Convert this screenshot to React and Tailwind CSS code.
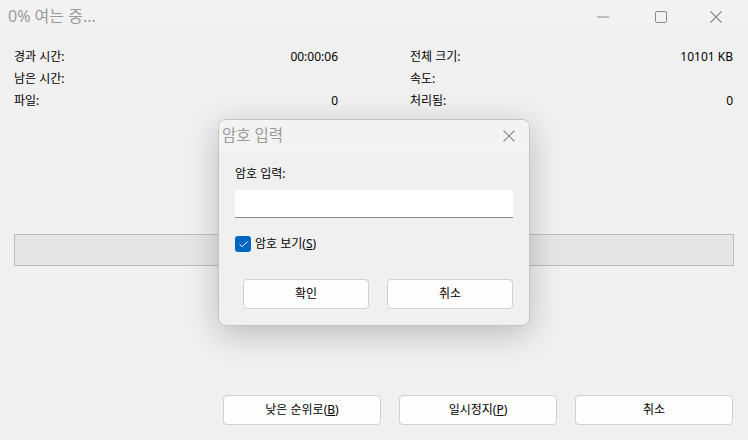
import { Check } from 'lucide-react';

const font = { fontFamily: '"Segoe UI", "Noto Sans", "Noto Sans CJK KR", sans-serif' };

const StatRow = ({ label, value }) => (
  <div className="flex items-center justify-between h-[22px]">
    <span>{label}</span>
    <span>{value}</span>
  </div>
);

const WinButton = ({ children, className = '' }) => (
  <button className={`h-[30px] rounded-[4px] border border-[#d0d0d0] bg-[#fdfdfd] text-[12px] text-black leading-none flex items-center justify-center ${className}`}>
    {children}
  </button>
);

const PasswordDialog = () => (
  <div className="absolute left-[218px] top-[119px] w-[312px] h-[207px] rounded-[8px] border border-[#c4c4c4] bg-[#f0f0f0] shadow-[0_8px_32px_rgba(0,0,0,0.22)] overflow-hidden flex flex-col">
    <div className="h-[31px] bg-[#f3f3f3] flex items-center justify-between pl-[3px] pr-[14px]">
      <span className="text-[15.5px] text-[#9a9a9a]">암호 입력</span>
      <svg width="12" height="12" viewBox="0 0 12 12" stroke="#8a8a8a" strokeWidth="1.1">
        <path d="M0.5 0.5L11.5 11.5M11.5 0.5L0.5 11.5" />
      </svg>
    </div>
    <div className="flex flex-col px-[16px] pt-[15px]">
      <span className="text-[12px] leading-[16px]">암호 입력:</span>
      <div className="mt-[8px] h-[28px] bg-white border-b border-[#8a8a8a] rounded-t-[2px]" />
      <label className="mt-[18px] flex items-center gap-[4px] text-[12px] leading-[16px]">
        <span className="w-[16px] h-[16px] rounded-[3px] bg-[#0067c0] flex items-center justify-center">
          <Check size={11} color="white" strokeWidth={2} />
        </span>
        <span>암호 보기(<u>S</u>)</span>
      </label>
      <div className="mt-[27px] flex gap-[18px] pl-[8px]">
        <WinButton className="w-[126px]">확인</WinButton>
        <WinButton className="w-[126px]">취소</WinButton>
      </div>
    </div>
  </div>
);

export default function App() {
  return (
    <div style={font} className="relative w-[748px] h-[440px] bg-[#f0f0f0] text-black flex flex-col overflow-hidden">
      <div className="h-[33px] bg-gradient-to-b from-[#f3f3f3] to-[#f1f1f1] flex items-center justify-between pl-[8px]">
        <span className="text-[16px] text-[#9a9a9a] -mt-[1px]">0% 여는 중...</span>
        <div className="flex items-center h-full">
          <div className="w-[58px] h-full flex items-center justify-center">
            <svg width="12" height="2" viewBox="0 0 12 2"><path d="M0 1H12" stroke="#8a8a8a" strokeWidth="1" /></svg>
          </div>
          <div className="w-[58px] h-full flex items-center justify-center">
            <svg width="12" height="12" viewBox="0 0 12 12"><rect x="0.5" y="0.5" width="11" height="11" rx="1.5" fill="none" stroke="#8a8a8a" strokeWidth="1" /></svg>
          </div>
          <div className="w-[58px] h-full flex items-center justify-center pr-[6px]">
            <svg width="12" height="12" viewBox="0 0 12 12"><path d="M0.5 0.5L11.5 11.5M11.5 0.5L0.5 11.5" stroke="#8a8a8a" strokeWidth="1.1" /></svg>
          </div>
        </div>
      </div>

      <div className="flex flex-col flex-1 px-[14px] pt-[13px] pb-[15px]">
        <div className="grid grid-cols-[324px_323px] gap-x-[72px] text-[12px] leading-[16px]">
          <div className="flex flex-col">
            <StatRow label="경과 시간:" value="00:00:06" />
            <StatRow label="남은 시간:" value="" />
            <StatRow label="파일:" value="0" />
          </div>
          <div className="flex flex-col">
            <StatRow label="전체 크기:" value="10101 KB" />
            <StatRow label="속도:" value="" />
            <StatRow label="처리됨:" value="0" />
          </div>
        </div>

        <div className="mt-[122px] w-[720px] h-[32px] border border-[#bcbcbc] bg-[#e6e6e6]" />

        <div className="mt-auto flex justify-end gap-[18px] pr-[1px]">
          <WinButton className="w-[158px]">낮은 순위로(<u>B</u>)</WinButton>
          <WinButton className="w-[158px]">일시정지(<u>P</u>)</WinButton>
          <WinButton className="w-[158px]">취소</WinButton>
        </div>
      </div>

      <PasswordDialog />
    </div>
  );
}
